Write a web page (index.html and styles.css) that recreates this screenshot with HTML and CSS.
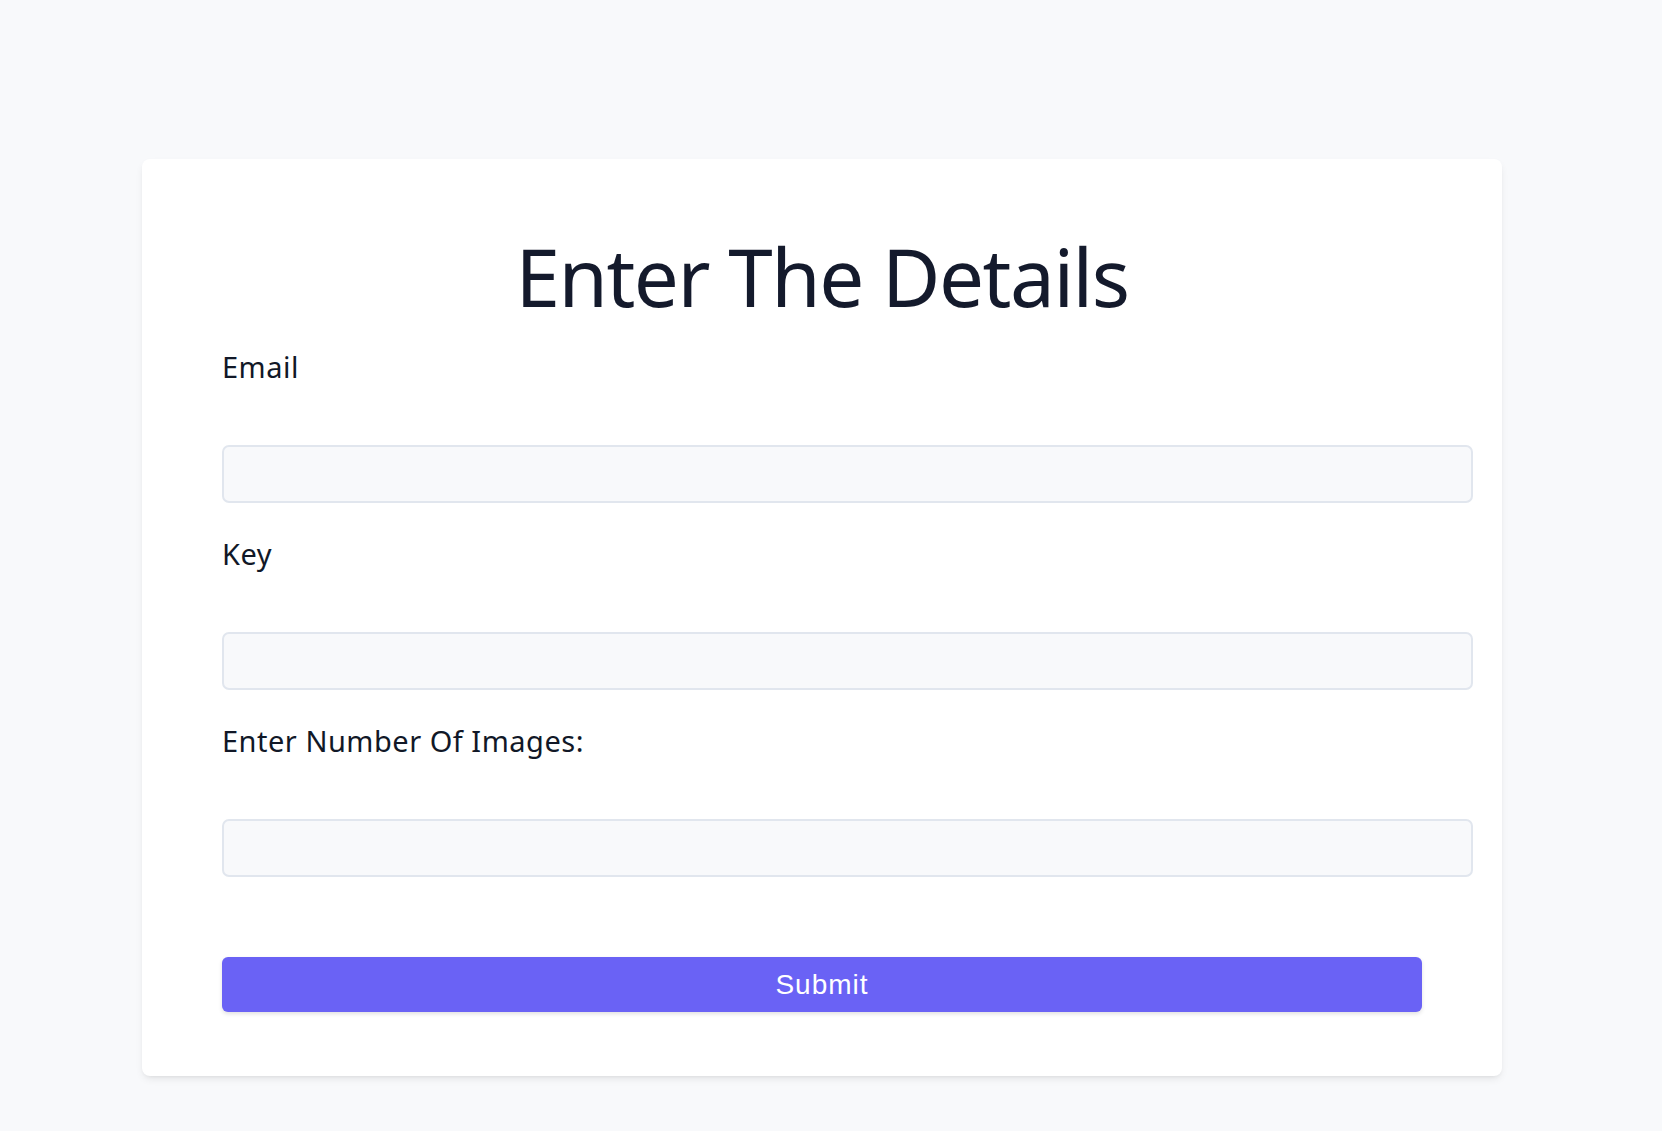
FILE: index.html
```html
<!DOCTYPE html>
<html lang="en">
<head>
<meta charset="utf-8">
<title>Enter The Details</title>
<link rel="stylesheet" href="styles.css">
</head>
<body>
  <main class="page">
    <form class="card">
      <h1 class="title">Enter The Details</h1>
      <label class="label" for="email">Email</label>
      <input class="field" id="email" type="email">
      <label class="label" for="key">Key</label>
      <input class="field" id="key" type="text">
      <label class="label" for="num">Enter Number Of Images:</label>
      <input class="field" id="num" type="number">
      <button class="submit" type="button">Submit</button>
    </form>
  </main>
</body>
</html>
```

FILE: styles.css
```css
html, body {
  margin: 0;
  padding: 0;
  background: #f8f9fb;
}
.page {
  padding-top: 159px;
  padding-left: 142px;
  min-height: 1131px;
  box-sizing: border-box;
}
.card {
  width: 1360px;
  box-sizing: border-box;
  background: #ffffff;
  border-radius: 8px;
  box-shadow: 0 4px 8px -2px rgba(0,0,0,0.10), 0 2px 4px -2px rgba(0,0,0,0.06);
  padding: 77px 80px 64px 80px;
  display: flex;
  flex-direction: column;
  align-items: flex-start;
  font-family: "Noto Sans", "Open Sans", sans-serif;
  color: #111827;
}
.title {
  align-self: stretch;
  margin: 0 0 31px 0;
  font-size: 80px;
  line-height: 80px;
  font-weight: 400;
  letter-spacing: -1.5px;
  text-align: center;
  color: #141a2c;
}
.label {
  display: block;
  font-size: 29px;
  line-height: 40px;
  height: 40px;
  letter-spacing: 0.5px;
  margin-bottom: 58px;
  color: #111827;
}
.field {
  display: block;
  width: calc(100% + 51px);
  height: 58px;
  box-sizing: border-box;
  margin: 0 0 31px 0;
  background: #f8f9fb;
  border: 2px solid #e1e6ee;
  border-radius: 7px;
  outline: none;
  font-size: 20px;
}
.submit {
  margin-top: 49px;
  width: 100%;
  height: 55px;
  border: none;
  border-radius: 6px;
  background: #6a62f5;
  color: #ffffff;
  font-family: "Liberation Sans", Arial, sans-serif;
  font-size: 28px;
  letter-spacing: 1px;
  box-shadow: 0 2px 4px rgba(0,0,0,0.12);
  padding: 0;
}
```
